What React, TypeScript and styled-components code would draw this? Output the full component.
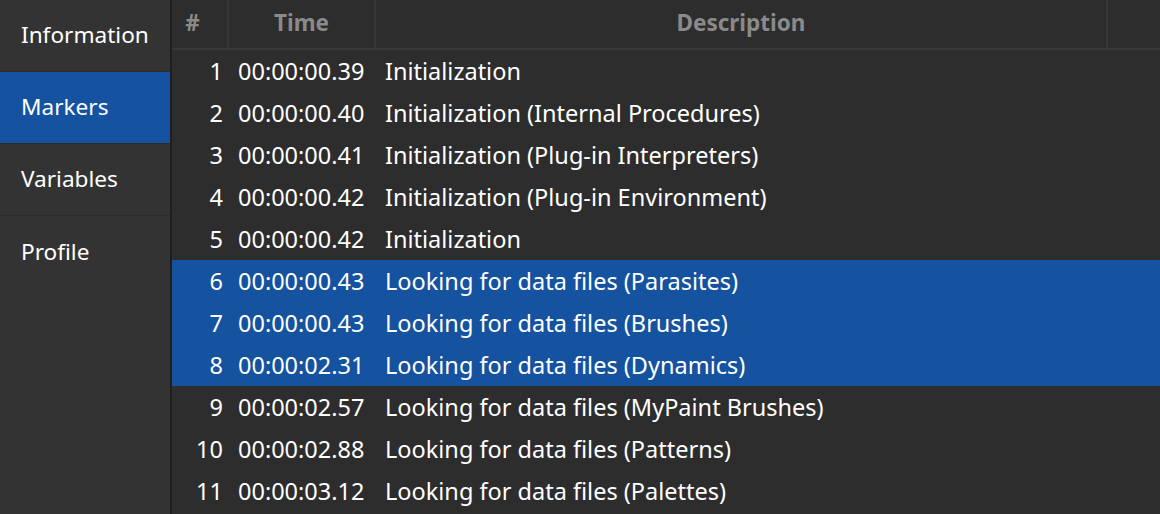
import styled, { createGlobalStyle } from "styled-components";

const Global = createGlobalStyle`
  html, body {
    margin: 0;
    padding: 0;
    background: #2d2d2d;
  }
  body {
    font-family: "Noto Sans", "DejaVu Sans", sans-serif;
  }
`;

const Layout = styled.div`
  display: flex;
  width: 1160px;
  height: 514px;
  overflow: hidden;
  background: #2d2d2d;
`;

const Sidebar = styled.nav`
  width: 170px;
  flex-shrink: 0;
  background: #333333;
  border-right: 2px solid #1e1e1e;
  display: flex;
  flex-direction: column;
`;

const NavItem = styled.div<{ $active?: boolean }>`
  height: 72px;
  border-bottom: 1px solid #2b2b2b;
  display: flex;
  align-items: center;
  padding-left: 21px;
  padding-bottom: 2px;
  box-sizing: border-box;
  font-size: 22.6px;
  color: #ffffff;
  background: ${(p) => (p.$active ? "#1552a0" : "transparent")};
  &:last-child {
    border-bottom: none;
  }
`;

const Table = styled.div`
  flex: 1;
  display: flex;
  flex-direction: column;
`;

const cols = "57px 147px 732px 1fr";

const HeaderRow = styled.div`
  display: grid;
  grid-template-columns: ${cols};
  height: 48px;
  border-bottom: 2px solid #383838;
`;

const HeaderCell = styled.div<{ $shift?: number }>`
  display: flex;
  align-items: center;
  justify-content: center;
  border-right: 2px solid #363636;
  color: #8a8a8a;
  font-weight: 700;
  font-size: 22.5px;
  padding-bottom: 3px;
  padding-right: ${(p) => p.$shift ?? 0}px;
  &:last-child {
    border-right: none;
  }
`;

const Row = styled.div<{ $selected?: boolean }>`
  display: grid;
  grid-template-columns: ${cols};
  height: 42px;
  align-items: center;
  color: #ffffff;
  font-size: 23.5px;
  background: ${(p) => (p.$selected ? "#1552a0" : "transparent")};
`;

const NumCell = styled.div`
  text-align: right;
  padding-right: 6px;
`;

const TimeCell = styled.div`
  padding-left: 9px;
  white-space: nowrap;
`;

const DescCell = styled.div`
  padding-left: 9px;
  white-space: nowrap;
`;

const markers = [
  ["00:00:00.39", "Initialization"],
  ["00:00:00.40", "Initialization (Internal Procedures)"],
  ["00:00:00.41", "Initialization (Plug-in Interpreters)"],
  ["00:00:00.42", "Initialization (Plug-in Environment)"],
  ["00:00:00.42", "Initialization"],
  ["00:00:00.43", "Looking for data files (Parasites)"],
  ["00:00:00.43", "Looking for data files (Brushes)"],
  ["00:00:02.31", "Looking for data files (Dynamics)"],
  ["00:00:02.57", "Looking for data files (MyPaint Brushes)"],
  ["00:00:02.88", "Looking for data files (Patterns)"],
  ["00:00:03.12", "Looking for data files (Palettes)"],
];

const selected = [6, 7, 8];

export default function App() {
  return (
    <>
      <Global />
      <Layout>
        <Sidebar>
          <NavItem>Information</NavItem>
          <NavItem $active>Markers</NavItem>
          <NavItem>Variables</NavItem>
          <NavItem>Profile</NavItem>
        </Sidebar>
        <Table>
          <HeaderRow>
            <HeaderCell $shift={14}>#</HeaderCell>
            <HeaderCell>Time</HeaderCell>
            <HeaderCell>Description</HeaderCell>
            <HeaderCell />
          </HeaderRow>
          {markers.map(([time, desc], i) => (
            <Row key={i} $selected={selected.includes(i + 1)}>
              <NumCell>{i + 1}</NumCell>
              <TimeCell>{time}</TimeCell>
              <DescCell>{desc}</DescCell>
              <div />
            </Row>
          ))}
        </Table>
      </Layout>
    </>
  );
}
